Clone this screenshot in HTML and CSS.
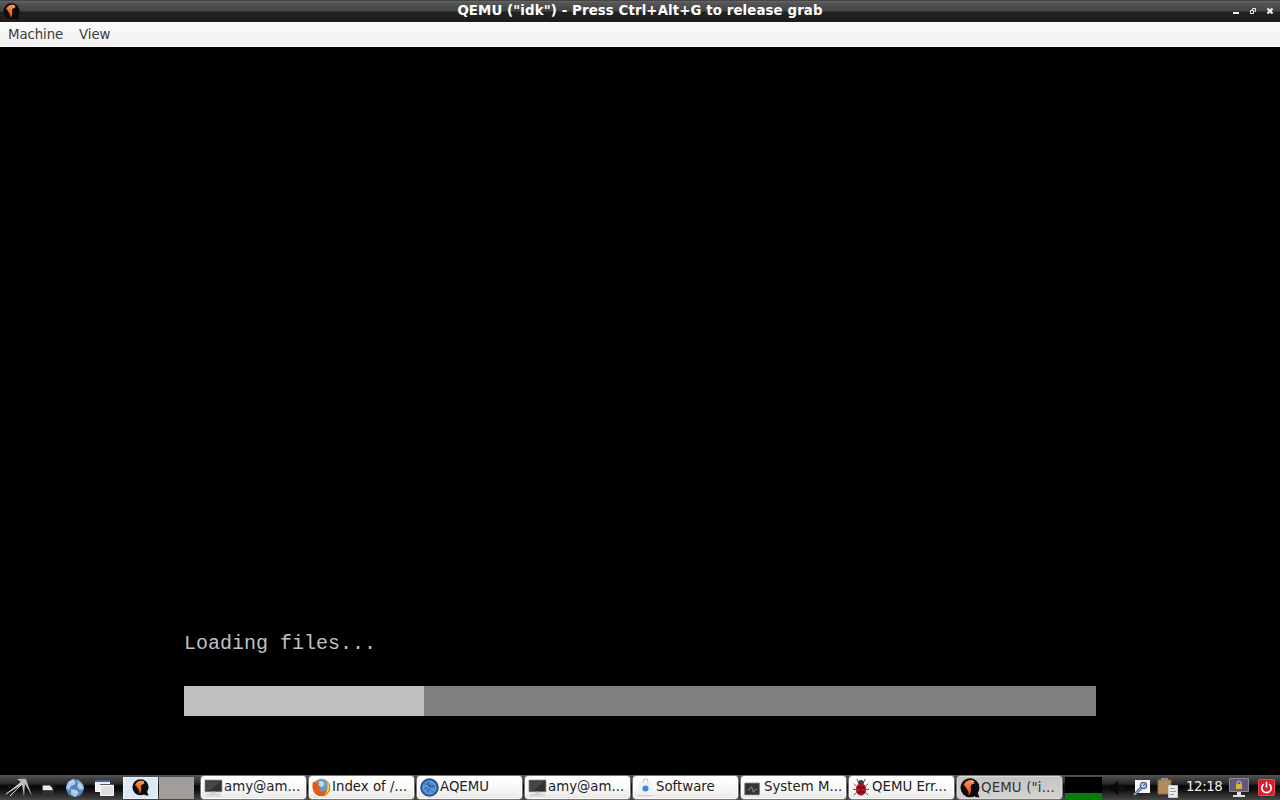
FILE: index.html
```
<!DOCTYPE html>
<html lang="en">
<head>
    <meta charset="UTF-8">
    <title>QEMU</title>
    <link rel="stylesheet" href="styles.css">
</head>
<body>
    <svg class="defs">
        <defs>
            <linearGradient id="orange" x1="0" y1="0" x2="0" y2="1">
                <stop offset="0" stop-color="#ff9350"/>
                <stop offset="1" stop-color="#e44c08"/>
            </linearGradient>
            <symbol id="qemu" viewBox="0 0 20 20">
                <circle cx="10" cy="9.700" r="9.500" fill="#0c0c0c"/>
                <path d="M12 16l5-3 2.500 6.500-4-.5z" fill="#0c0c0c"/>
                <path d="M3.500 8.500C4 4 8 1.500 12 2l2.500 1.500-1 1.300 1.500 1c-3-.3-4.500 1-4.300 3.200.2 2.500 1 5-2.200 8.500.5-3.500-.5-5-2-7C5.500 9.300 5 8 4.800 7z" fill="url(#orange)"/>
                <path d="M12 3.400h2" stroke="#fff" stroke-width=".6"/>
            </symbol>
            <symbol id="terminal" viewBox="0 0 18 18">
                <path d="M1 2h16v11H1z" fill="#303232" stroke="#777" stroke-width=".7"/>
                <path d="M2 3h14L5 12H2z" fill="#454747"/>
                <path d="M7 13h4v2H7z" fill="#ccc"/>
                <path d="M3 15.500h12l1 1.500H2z" fill="#e4e4e4" stroke="#bbb" stroke-width=".5"/>
            </symbol>
        </defs>
    </svg>

    <header class="titlebar">
        <svg class="titlebar-icon"><use href="#qemu"/></svg>
        <h1 class="titlebar-text">QEMU ("idk") - Press Ctrl+Alt+G to release grab</h1>
        <div class="titlebar-buttons">
            <svg viewBox="0 0 8 8"><path d="M1 6h6" stroke="#eee" stroke-width="2"/></svg>
            <svg viewBox="0 0 8 8"><path d="M3.500 3V1.500h3v3H5.500M1.500 3.500h3v3h-3z" fill="none" stroke="#eee"/></svg>
            <svg viewBox="0 0 8 8"><path d="M1.500 1.500l5 5M6.500 1.500l-5 5" stroke="#eee" stroke-width="2.200"/></svg>
        </div>
    </header>

    <nav class="menubar">
        <span>Machine</span>
        <span>View</span>
    </nav>

    <main class="screen">
        <p class="loading">Loading files...</p>
        <div class="progress">
            <div class="progress-done"></div>
        </div>
    </main>

    <footer class="panel">
        <div class="launchers">
            <svg class="launcher launcher--menu" viewBox="0 0 32 24">
                <path d="M3 19L19 6l-4-3c4-.5 7-.5 9 0l6 17-7-12-1 13-2-12C14 12 9 15 3 19z" fill="#b9b9b9"/>
                <path d="M8 20L20 8M4 18L20 6" stroke="#d8d8d8" fill="none"/>
            </svg>
            <svg class="launcher launcher--files" viewBox="0 0 16 18">
                <path d="M1 4h11l3 5v8H1z" fill="#262626"/>
                <path d="M2 6h8l2 2 2 4H2z" fill="#ececec"/>
                <path d="M1 11.500h14v5H1z" fill="#303030"/>
            </svg>
            <svg class="launcher launcher--web" viewBox="0 0 20 20">
                <circle cx="10" cy="10" r="9" fill="#5484bd"/>
                <path d="M3 4l5-3 3 3-2 3-3 1-2 4-3-2zM12 2l5 4 2 5-4 1-3-3 1-3zM6 11l6 1 2 3-4 4-4-3z" fill="#a9c8e8"/>
                <path d="M5 5l4-2M13 6l3 3M8 13l3 2" stroke="#dceaf7"/>
            </svg>
            <svg class="launcher launcher--windows" viewBox="0 0 20 18">
                <path d="M.5 1.500h14v11H.5z" fill="#ededed" stroke="#fff"/>
                <path d="M0 1h15v2H0z" fill="#3967a5"/>
                <path d="M5.500 6.500h13v10h-13z" fill="#dedede" stroke="#fafafa"/>
                <path d="M5 5.500h14" stroke="#555"/>
            </svg>
        </div>

        <div class="pager">
            <div class="desk desk--current"><svg><use href="#qemu"/></svg></div>
            <div class="desk"></div>
        </div>

        <div class="tasks">
            <div class="task"><svg><use href="#terminal"/></svg><span>amy@am...</span></div>
            <div class="task">
                <svg viewBox="0 0 20 20">
                    <circle cx="10" cy="10" r="9.200" fill="#e87817"/>
                    <circle cx="10.500" cy="8.500" r="6.800" fill="#6c9cc8"/>
                    <path d="M8 3l4 1 1 3-3 3-3-2z" fill="#c1d9e8"/>
                    <path d="M1 4l3 1 3 1-1 2 4 2-3 2c1 3 6 3 10-1l1-6c3 6-1 14-8 14S-1 12 1 4z" fill="#df5d15"/>
                    <path d="M16 3c4 5 3 12-3 15 3-4 4-8 3-15z" fill="#f9ca43"/>
                </svg>
                <span>Index of /...</span>
            </div>
            <div class="task">
                <svg viewBox="0 0 20 20">
                    <circle cx="10" cy="10" r="9" fill="#3973be" stroke="#234e8b" stroke-width="1.500"/>
                    <circle cx="10" cy="10" r="6.500" fill="#4e8cd4" stroke="#9bc2ec" stroke-width=".6"/>
                    <path d="M4 6l5 2 5 7M5 12l5-4 6 1M7 15l4-5-3-6" fill="none" stroke="#234e90"/>
                    <path d="M5 7l5 3 4 4" fill="none" stroke="#9bc7f2" stroke-width=".8"/>
                </svg>
                <span>AQEMU</span>
            </div>
            <div class="task"><svg><use href="#terminal"/></svg><span>amy@am...</span></div>
            <div class="task">
                <svg viewBox="0 0 20 20">
                    <path d="M3 4h14l1 14H2z" fill="#edf2f8"/>
                    <path d="M2 18.500h16" stroke="#c2c8d0"/>
                    <path d="M7.500 5V3.500a2.500 2.500 0 0 1 5 0V5" fill="none" stroke="#a7b6c8"/>
                    <circle cx="10" cy="11" r="3.200" fill="#4187da"/>
                </svg>
                <span>Software</span>
            </div>
            <div class="task">
                <svg viewBox="0 0 20 20">
                    <path d="M1 5.500h15v12H1z" fill="#303536" stroke="#555"/>
                    <path d="M4 12h2l2-3 2 6 2-3h2" fill="none" stroke="#8b9290"/>
                </svg>
                <span>System M...</span>
            </div>
            <div class="task">
                <svg viewBox="0 0 20 20">
                    <path d="M7 5L5 1M12 5l2-4M5 9L2 6M14 9l3-3M4 12H1M15 12h3M5 15l-3 3M14 15l3 3" stroke="#5c4a40"/>
                    <circle cx="9.500" cy="5" r="3" fill="#4a3830"/>
                    <ellipse cx="9.500" cy="12" rx="5.500" ry="6.500" fill="#bd1426"/>
                    <path d="M9.500 6v12" stroke="#550b12"/>
                    <path d="M6 9h2v2H6zM11 9h2v2h-2zM6 14h2v2H6zM11 14h2v2h-2z" fill="#440a10"/>
                </svg>
                <span>QEMU Err...</span>
            </div>
            <div class="task task--active"><svg><use href="#qemu"/></svg><span>QEMU ("i...</span></div>
        </div>

        <div class="tray">
            <div class="cpu"></div>
            <svg class="tray-volume" viewBox="0 0 20 20">
                <path d="M3 7h3l5-4v14l-5-4H3z" fill="#080808"/>
                <path d="M13 7q2 3 0 6M15 5q3 5 0 10" fill="none" stroke="#151515"/>
            </svg>
            <svg class="tray-tool" viewBox="0 0 18 18">
                <path d="M2 1h15v13H2z" fill="#f4f6fa"/>
                <path d="M1 16l8-8" stroke="#52698e" stroke-width="3"/>
                <path d="M1 16l8-8" stroke="#b6c9e3"/>
                <circle cx="10.500" cy="6.500" r="3" fill="#dce6f2" stroke="#4d658b" stroke-width="1.500"/>
                <path d="M10 7l2-2" stroke="#4d658b" stroke-width="1.200"/>
            </svg>
            <svg class="tray-clipboard" viewBox="0 0 22 20">
                <path d="M1 2h13v14H1z" fill="#b18a5b" stroke="#8b6c47"/>
                <path d="M4 0h7v4H4z" fill="#918d86"/>
                <path d="M11.500 7.500h9v12h-9z" fill="#ececec" stroke="#c9c9c9"/>
                <path d="M13 10.500h5M13 13.500h6M13 16.500h4" stroke="#999"/>
            </svg>
            <span class="clock">12:18</span>
            <svg class="tray-lock" viewBox="0 0 20 20">
                <path d="M.5.5h19v13H.5z" fill="#65587b" stroke="#8f8a9a"/>
                <path d="M8 14h4v3h4v2H4v-2h4z" fill="#dedede"/>
                <path d="M8 6.500V5a2 2 0 0 1 4 0v1.500" fill="none" stroke="#d5cda5"/>
                <path d="M7 6h6v5H7z" fill="#d5b63d"/>
            </svg>
            <svg class="tray-power" viewBox="0 0 18 18">
                <rect x=".5" y=".5" width="17" height="17" rx="1.500" fill="#d91c2b" stroke="#ed5560"/>
                <path d="M6 5.500a5 5 0 1 0 6 0M9 3v6" fill="none" stroke="#fff" stroke-width="1.800"/>
            </svg>
        </div>
    </footer>
</body>
</html>
```
FILE: styles.css
```
* {
    box-sizing: border-box;
}
body {
    margin: 0;
    width: 1280px;
    height: 800px;
    overflow: hidden;
    display: flex;
    flex-direction: column;
    background: #000;
    font-family: "DejaVu Sans", sans-serif;
    font-size: 13.33px;
}
svg {
    display: block;
    flex: none;
}
.defs {
    width: 0;
    height: 0;
    position: absolute;
}
.titlebar {
    height: 22px;
    flex: none;
    display: grid;
    grid-template-columns: 60px 1fr 60px;
    align-items: center;
    color: #fff;
    background: linear-gradient(#222 0, #666 1px, #555 3px, #424442 11px, #222 12px, #1c1c1c 22px);
}
.titlebar-icon {
    width: 17px;
    height: 17px;
    margin-left: 3px;
}
.titlebar-text {
    margin: 0;
    text-align: center;
    font-size: 13.33px;
    line-height: 20px;
    font-weight: bold;
    letter-spacing: 0.11px;
}
.titlebar-buttons {
    display: flex;
    justify-content: flex-end;
    gap: 9px;
    padding-right: 6px;
}
.titlebar-buttons svg {
    width: 8px;
    height: 8px;
}
.menubar {
    height: 25px;
    flex: none;
    display: flex;
    gap: 16px;
    padding: 1px 0 0 8px;
    line-height: 24px;
    letter-spacing: -0.1px;
    color: #3c3c3c;
    background: linear-gradient(#fafaf9, #f3f2f0);
    border-bottom: 1px solid #fff;
}
.screen {
    flex: 1;
    padding: 583px 184px 0;
    background: #000;
}
.loading {
    margin: 0;
    height: 56px;
    font-family: "Liberation Mono", monospace;
    font-size: 20px;
    line-height: 28px;
    color: #c0c0c0;
}
.progress {
    height: 30px;
    background: #808080;
}
.progress-done {
    width: 240px;
    height: 30px;
    background: #c0c0c0;
}
.panel {
    height: 25px;
    flex: none;
    display: flex;
    align-items: center;
    background: linear-gradient(#555 0, #444 3px, #272727 9px, #050505 11px, #111 15px, #484848 25px);
}
.launchers {
    width: 123px;
    display: flex;
    align-items: center;
}
.launcher--menu {
    width: 32px;
    height: 24px;
    margin-left: 2px;
}
.launcher--files {
    width: 14px;
    height: 18px;
    margin-left: 7px;
}
.launcher--web {
    width: 20px;
    height: 20px;
    margin-left: 10px;
}
.launcher--windows {
    width: 20px;
    height: 18px;
    margin-left: 10px;
}
.pager {
    width: 77px;
    display: flex;
    gap: 1px;
}
.desk {
    width: 35px;
    height: 22px;
    display: flex;
    align-items: center;
    justify-content: center;
    background: #a19d99;
}
.desk--current {
    background: #dce8f7;
    border: 1px solid #eef4fb;
}
.desk svg {
    width: 17px;
    height: 17px;
}
.tasks {
    display: flex;
    gap: 1px;
}
.task {
    width: 107px;
    height: 25px;
    display: flex;
    align-items: center;
    gap: 1px;
    padding-left: 3px;
    color: #222;
    white-space: nowrap;
    line-height: 21px;
    background: linear-gradient(#fff, #f9f9f8 50%, #e9e8e7);
    border: 1px solid #777;
    border-radius: 4px;
    box-shadow: inset 0 0 0 1px #fff;
}
.task span {
    padding-bottom: 2px;
}
.task svg {
    width: 19px;
    height: 19px;
}
.task--active {
    color: #333;
    background: linear-gradient(#c4c3c2, #d4d3d1);
    box-shadow: inset 0 0 0 1px #dcdbda;
}
.task--active span {
    padding-bottom: 0;
    letter-spacing: 0.15px;
}
.task--active svg {
    width: 20px;
    height: 20px;
}
.tray {
    display: flex;
    align-items: center;
    padding-left: 2px;
    color: #eee;
}
.cpu {
    width: 37px;
    height: 22px;
    background: #000;
    border-bottom: 6px solid #078007;
}
.tray-volume {
    width: 20px;
    height: 20px;
    margin-left: 5px;
}
.tray-tool {
    width: 18px;
    height: 18px;
    margin-left: 6px;
}
.tray-clipboard {
    width: 22px;
    height: 20px;
    margin-left: 6px;
}
.clock {
    width: 38px;
    margin-left: 7px;
    padding-bottom: 2px;
    line-height: 21px;
    letter-spacing: -0.4px;
}
.tray-lock {
    width: 20px;
    height: 20px;
    margin-left: 5px;
}
.tray-power {
    width: 17px;
    height: 17px;
    margin-left: 9px;
}
```
